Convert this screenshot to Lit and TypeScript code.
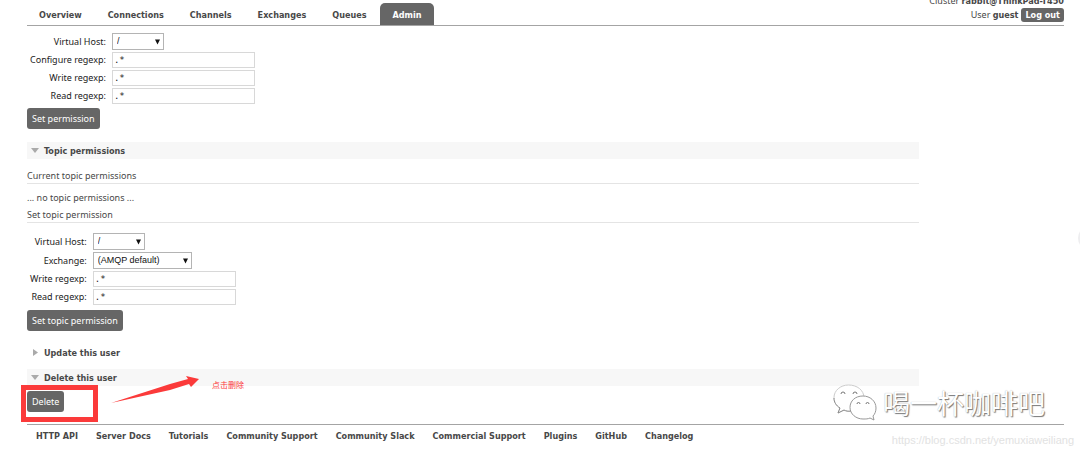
import { LitElement, html, css, svg } from "lit";
import { customElement, property } from "lit/decorators.js";

@customElement("app-select")
class AppSelect extends LitElement {
  @property() label = "";
  @property() value = "";
  static styles = css`
    :host { display: inline-grid; }
    select, svg { grid-area: 1 / 1; }
    select {
      appearance: none;
      box-sizing: border-box;
      width: 100%;
      height: 17px;
      margin: 0;
      padding: 0 4px;
      border: 1px solid #b4b4b4;
      border-radius: 0;
      background: #fff;
      color: #111;
      font: 9px/15px "Liberation Sans", Arial, sans-serif;
    }
    svg { justify-self: end; align-self: center; margin-right: 4px; pointer-events: none; }
  `;
  render() {
    return html`<select aria-label=${this.label}><option>${this.value}</option></select>
      <svg width="5" height="6" viewBox="0 0 5 6"><path d="M0 0.5H5L2.5 5.5Z" fill="#111" /></svg>`;
  }
}

const tabs = ["Overview", "Connections", "Channels", "Exchanges", "Queues", "Admin"];
const links = ["HTTP API", "Server Docs", "Tutorials", "Community Support", "Community Slack", "Commercial Support", "Plugins", "GitHub", "Changelog"];

const open = svg`<path d="M0 1H8L4 6Z" fill="#aaa"/>`;
const closed = svg`<path d="M2 0V7L7 3.5Z" fill="#aaa"/>`;

@customElement("app-root")
class AppRoot extends LitElement {
  static styles = css`
    :host {
      --strong: "DejaVu Sans Condensed", "DejaVu Sans", Verdana, sans-serif;
      display: block;
      position: relative;
      overflow: hidden;
      min-height: 100vh;
      box-sizing: border-box;
      padding: 0 16px 0 27px;
      background: #fff;
      color: #484848;
      font: 9px/12px "Noto Sans", Verdana, sans-serif;
    }
    b { font-family: var(--strong); }
    header {
      display: flex;
      justify-content: space-between;
      align-items: flex-end;
      height: 25px;
      border-bottom: 1px solid #a4a4a4;
    }
    nav { display: flex; gap: 2px; }
    nav a {
      padding: 6px 12px 4px;
      border-radius: 5px 5px 0 0;
      color: #484848;
      font-family: var(--strong);
      font-weight: bold;
      text-decoration: none;
    }
    nav a.active { background: #666; color: #fff; }
    .status { text-align: right; }
    .status div { line-height: 14px; }
    .user { display: flex; justify-content: flex-end; align-items: center; gap: 3px; padding-bottom: 3px; }
    button {
      display: block;
      border: 0;
      border-radius: 3px;
      background: #666;
      color: #fff;
      font: inherit;
      padding: 5px 5px 4px;
      height: 21px;
      white-space: nowrap;
    }
    .user button { height: 14px; padding: 0 4px; font-family: var(--strong); font-weight: bold; line-height: 14px; }
    main { margin-right: 145px; }
    .fields {
      display: grid;
      width: max-content;
      grid-template-columns: auto 143px;
      column-gap: 6px;
      row-gap: 2px;
      padding: 7px 0 4px 3px;
      align-items: center;
      color: #222;
    }
    .topic { padding-top: 10px; padding-bottom: 5px; }
    label { text-align: right; }
    .fields input {
      box-sizing: border-box;
      height: 16px;
      width: 100%;
      margin: 0;
      border: 1px solid #d8d8d8;
      padding: 0 1px;
      background: #fff;
      color: #222;
      font: 9px/14px "DejaVu Sans Mono", monospace;
    }
    app-select { width: 52px; }
    app-select.wide { width: 99px; }
    h2 {
      display: flex;
      align-items: center;
      gap: 5px;
      height: 17px;
      margin: 0;
      padding-left: 4px;
      font-family: var(--strong);
      font-size: 9px;
    }
    h2.open { background: #f7f7f7; }
    h3 {
      margin: 0;
      padding-bottom: 1px;
      border-bottom: 1px solid #e4e4e4;
      font-size: 9px;
      font-weight: normal;
    }
    .t1 { margin-top: 13px; }
    .t2 { margin-top: 11px; }
    .none { margin: 8px 0 5px; }
    .t3 { margin-top: 13px; margin-bottom: 8px; }
    .delete { position: relative; padding: 5px 0 12px; }
    .box { position: absolute; left: -6px; top: -1px; width: 67px; height: 27px; border: 5px solid #fb3a3a; pointer-events: none; }
    .arrow { position: absolute; left: 83px; top: -11px; }
    .note { position: absolute; left: 185px; top: -7px; color: #fb3a3a; font: 8px/12px "Noto Sans CJK SC", sans-serif; }
    footer { display: flex; gap: 18px; border-top: 1px solid #a4a4a4; padding: 5px 9px; }
    footer a { color: #484848; font-family: var(--strong); font-weight: bold; text-decoration: none; white-space: nowrap; }
    .mark { position: absolute; right: 35px; bottom: 29px; display: flex; align-items: center; gap: 6px; }
    .mark span {
      color: #fff;
      font: 27px/40px "Noto Sans CJK SC", sans-serif;
      text-shadow: 1px 1px 1px #777, 0 0 1px #aaa;
    }
    .url { position: absolute; right: 6px; bottom: 5px; color: #e2e2e2; font: 11px/14px "Liberation Sans", Arial, sans-serif; }
    .knob { position: absolute; right: -22px; top: 226px; width: 24px; height: 24px; border-radius: 50%; background: #eeeef0; }
  `;

  field(id: string, label: string) {
    return html`<label for=${id}>${label}</label><input id=${id} value=".*" />`;
  }

  render() {
    return html`
      <header>
        <nav>${tabs.map((t) => html`<a href="#" class=${t === "Admin" ? "active" : ""}>${t}</a>`)}</nav>
        <div class="status">
          <div>Cluster <b>rabbit@ThinkPad-T450</b></div>
          <div class="user"><span>User <b>guest</b></span><button>Log out</button></div>
        </div>
      </header>
      <main>
        <div class="fields">
          <label>Virtual Host:</label><app-select label="Virtual Host" value="/"></app-select>
          ${this.field("configure", "Configure regexp:")}
          ${this.field("write", "Write regexp:")}
          ${this.field("read", "Read regexp:")}
        </div>
        <button>Set permission</button>
        <h2 class="open t1"><svg width="8" height="7">${open}</svg>Topic permissions</h2>
        <h3 class="t2">Current topic permissions</h3>
        <p class="none">... no topic permissions ...</p>
        <h3>Set topic permission</h3>
        <div class="fields topic">
          <label>Virtual Host:</label><app-select label="Virtual Host" value="/"></app-select>
          <label>Exchange:</label><app-select class="wide" label="Exchange" value="(AMQP default)"></app-select>
          ${this.field("twrite", "Write regexp:")}
          ${this.field("tread", "Read regexp:")}
        </div>
        <button>Set topic permission</button>
        <h2 class="t3"><svg width="8" height="7">${closed}</svg>Update this user</h2>
        <h2 class="open">
          <svg width="8" height="7">${open}</svg>Delete this user
        </h2>
        <div class="delete">
          <button>Delete</button>
          <div class="box"></div>
          <svg class="arrow" width="90" height="30" viewBox="0 0 90 30">
            <path d="M1 28L60 9L78 4L76 1L89 4L81 12L79 9L60 15Z" fill="#fb3a3a" />
          </svg>
          <span class="note">点击删除</span>
        </div>
      </main>
      <footer>${links.map((l) => html`<a href="#">${l}</a>`)}</footer>
      <div class="mark">
        <svg width="44" height="38" viewBox="0 0 44 38" fill="#fff">
          <path d="M15.500 1C7.500 1 1 6.500 1 13.500C1 18 3 21.500 7 24L5 29L11 26C13 27 15 27.500 18 27C25 27 31 21 31 14C31 6 24 1 15.500 1Z" stroke="#ccc" />
          <path d="M1 14C1 18 3 21.500 7 24L5 29L11 26C13 27 15 27.500 18 27" stroke="#888" />
          <path d="M30 12C22 12 17 17 17 23.500C17 30 23 35 30 35C33 35 35 35 37 34L41 36L40 32C42 30 43 27 43 24C43 17 37 12 30 12Z" stroke="#999" />
          <path d="M8 10a2 2 0 0 1 4 0M20 10a2 2 0 0 1 4 0M24 20a1.500 1.500 0 0 1 3 0M33 20a1.500 1.500 0 0 1 3 0" fill="none" stroke="#777" />
        </svg>
        <span>喝一杯咖啡吧</span>
      </div>
      <div class="url">https://blog.csdn.net/yemuxiaweiliang</div>
      <div class="knob"></div>
    `;
  }
}
